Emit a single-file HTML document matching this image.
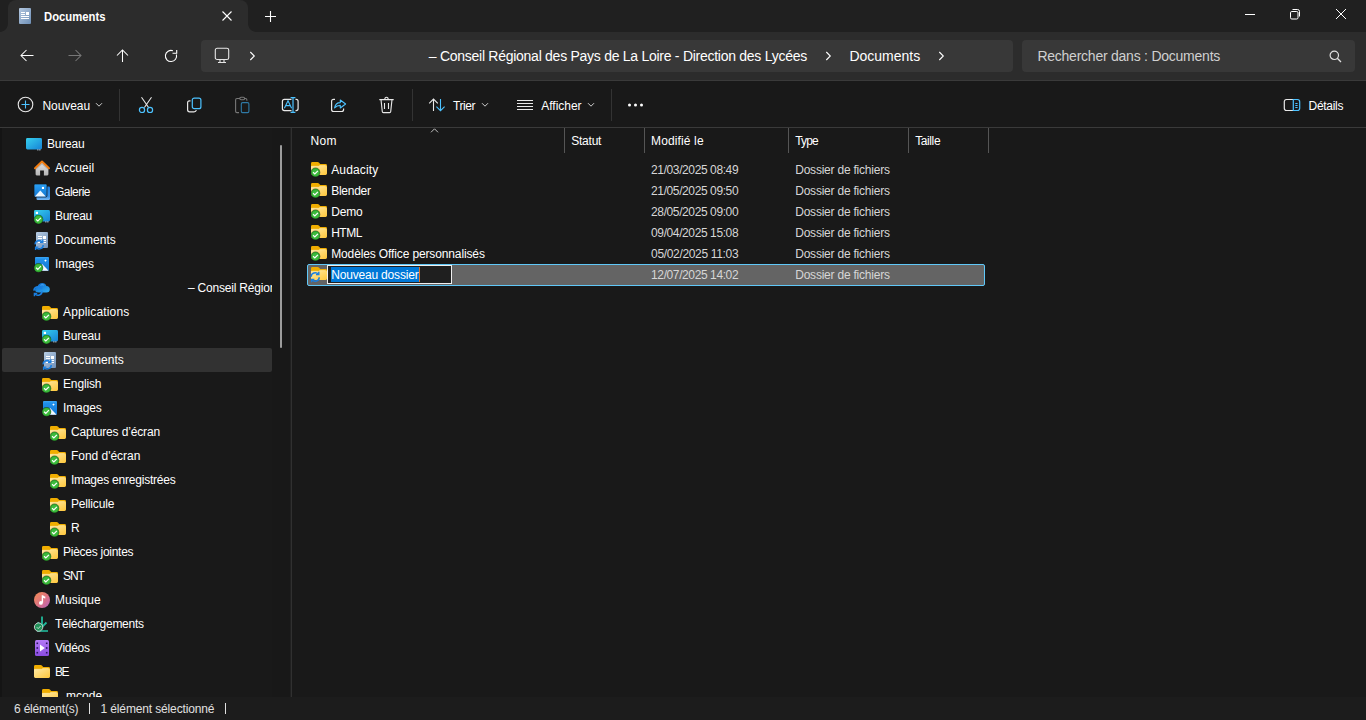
<!DOCTYPE html>
<html><head><meta charset="utf-8">
<style>
*{margin:0;padding:0;box-sizing:border-box}
html,body{width:1366px;height:720px;overflow:hidden;background:#191919;font-family:"Liberation Sans",sans-serif;color:#fff}
.a{position:absolute}
.t{position:absolute;white-space:nowrap}
svg{position:absolute;overflow:visible}
</style></head><body>

<div class="a" style="left:0;top:0;width:1366px;height:32px;background:#202020"></div>
<div class="a" style="left:8px;top:0;width:240px;height:32px;background:#2c2c2c;border-radius:8px 8px 0 0"></div>
<div class="a" style="left:0;top:24px;width:8px;height:8px;background:radial-gradient(circle at 0 0,#202020 7.5px,#2c2c2c 8.2px)"></div>
<div class="a" style="left:248px;top:24px;width:8px;height:8px;background:radial-gradient(circle at 8px 0,#202020 7.5px,#2c2c2c 8.2px)"></div>
<svg style="left:19px;top:8px;" width="13" height="17" viewBox="0 0 13 17"><defs><linearGradient id="dg" x1="0" y1="0" x2="1" y2="1"><stop offset="0" stop-color="#b4c8e0"/><stop offset="1" stop-color="#6e8fb6"/></linearGradient></defs>
<rect x="0" y="0" width="12" height="16" rx="1" fill="url(#dg)"/>
<rect x="2" y="4" width="4" height="1" fill="#fff"/><rect x="2" y="6" width="4" height="1" fill="#fff"/>
<rect x="7" y="4" width="3" height="3" fill="#fff"/><rect x="2" y="8" width="8" height="1" fill="#fff"/><rect x="2" y="10" width="8" height="1" fill="#fff"/></svg>
<div class="t" style="left:43.5px;top:8.84px;font-size:12px;line-height:16px;height:16px;color:#fff;font-weight:700;transform:scaleX(0.94);transform-origin:0 0">Documents</div>
<svg style="left:221px;top:10px;" width="12" height="12" viewBox="0 0 12 12"><path d="M1.5 1.5L10.5 10.5M10.5 1.5L1.5 10.5" stroke="#fff" stroke-width="1.1"/></svg>
<svg style="left:264px;top:10px;" width="13" height="13" viewBox="0 0 13 13"><path d="M6.5 1V12M1 6.5H12" stroke="#fff" stroke-width="1.1"/></svg>
<svg style="left:1244px;top:13px;" width="12" height="3" viewBox="0 0 12 3"><path d="M1 1.5H11" stroke="#fff" stroke-width="1"/></svg>
<svg style="left:1289px;top:8px;" width="12" height="12" viewBox="0 0 12 12"><rect x="1.5" y="3.5" width="7.5" height="7.5" rx="1.3" fill="none" stroke="#fff" stroke-width="1"/><path d="M3.5 1.5H8.5Q10.5 1.5 10.5 3.5V8.5" fill="none" stroke="#fff" stroke-width="1"/></svg>
<svg style="left:1335px;top:8px;" width="12" height="12" viewBox="0 0 12 12"><path d="M1 1L11 11M11 1L1 11" stroke="#fff" stroke-width="1"/></svg>
<div class="a" style="left:0;top:32px;width:1366px;height:48px;background:#2c2c2c"></div>
<div class="a" style="left:0;top:80px;width:1366px;height:1px;background:#3a3a3a"></div>
<div class="a" style="left:201px;top:40px;width:812px;height:32px;background:#383838;border-radius:4px"></div>
<div class="a" style="left:1022px;top:40px;width:333px;height:32px;background:#383838;border-radius:4px"></div>
<svg style="left:20px;top:49px;" width="15" height="14" viewBox="0 0 15 14"><path d="M1 6.5H13.5M6.5 1L1 6.5L6.5 12" fill="none" stroke="#fff" stroke-width="1.05"/></svg>
<svg style="left:67px;top:49px;" width="15" height="14" viewBox="0 0 15 14"><path d="M14 6.5H1.5M8.5 1L14 6.5L8.5 12" fill="none" stroke="#777" stroke-width="1.05"/></svg>
<svg style="left:116px;top:49px;" width="14" height="14" viewBox="0 0 14 14"><path d="M6.5 1V13M1 6.5L6.5 1L12 6.5" fill="none" stroke="#fff" stroke-width="1.05"/></svg>
<svg style="left:164px;top:49px;" width="15" height="15" viewBox="0 0 15 15"><path d="M8.9 1.7A5.6 5.6 0 1 0 12.4 5.5" fill="none" stroke="#fff" stroke-width="1.1"/><path d="M12.7 1V4.3H8.5" fill="none" stroke="#fff" stroke-width="1.1"/></svg>
<svg style="left:214px;top:47px;" width="16" height="17" viewBox="0 0 16 17"><rect x="1.3" y="1.3" width="13.4" height="11.2" rx="1.8" fill="none" stroke="#e6e6e6" stroke-width="1.1"/><path d="M6 13V15M10 13V15M4 15.5H12" stroke="#e6e6e6" stroke-width="1.1"/></svg>
<svg style="left:249px;top:51px;" width="7" height="10" viewBox="0 0 7 10"><path d="M1.3 1L5.3 5L1.3 9" fill="none" stroke="#fff" stroke-width="1.1"/></svg>
<div class="t" style="left:428.8px;top:46.65px;font-size:14px;line-height:19px;height:19px;color:#fff;letter-spacing:-0.269px;">– Conseil Régional des Pays de La Loire - Direction des Lycées</div>
<svg style="left:824.5px;top:51px;" width="7" height="10" viewBox="0 0 7 10"><path d="M1.3 1L5.3 5L1.3 9" fill="none" stroke="#fff" stroke-width="1.1"/></svg>
<div class="t" style="left:849.4px;top:46.65px;font-size:14px;line-height:19px;height:19px;color:#fff;letter-spacing:-0.001px;">Documents</div>
<svg style="left:938px;top:51px;" width="7" height="10" viewBox="0 0 7 10"><path d="M1.3 1L5.3 5L1.3 9" fill="none" stroke="#fff" stroke-width="1.1"/></svg>
<div class="t" style="left:1037.4px;top:46.95px;font-size:14px;line-height:19px;height:19px;color:#d0d0d0;letter-spacing:-0.238px;">Rechercher dans : Documents</div>
<svg style="left:1329px;top:50px;" width="14" height="14" viewBox="0 0 14 14"><circle cx="5.3" cy="5.3" r="4.2" fill="none" stroke="#e0e0e0" stroke-width="1.2"/><path d="M8.3 8.3L12 12" stroke="#e0e0e0" stroke-width="1.3"/></svg>
<div class="a" style="left:0;top:81px;width:1366px;height:46px;background:#191919"></div>
<div class="a" style="left:0;top:127px;width:1366px;height:1px;background:#3a3a3a"></div>
<svg style="left:17px;top:96px;" width="18" height="18" viewBox="0 0 18 18"><circle cx="8.5" cy="8.5" r="7.3" fill="none" stroke="#e8e8e8" stroke-width="1.1"/><path d="M8.5 4.5V12.5M4.5 8.5H12.5" stroke="#4cc2ff" stroke-width="1.1"/></svg>
<div class="t" style="left:42.4px;top:97.84px;font-size:12px;line-height:16px;height:16px;color:#fff;letter-spacing:-0.044px;">Nouveau</div>
<svg style="left:95px;top:102px;" width="8" height="6" viewBox="0 0 8 6"><path d="M1 1.2L4 4.2L7 1.2" fill="none" stroke="#cfcfcf" stroke-width="1"/></svg>
<div class="a" style="left:119px;top:89px;width:1px;height:32px;background:#333"></div>
<svg style="left:138px;top:96px;" width="17" height="18" viewBox="0 0 17 18"><path d="M3.5 1.2L10.6 11.5M13.5 1.2L6.4 11.5" stroke="#e8e8e8" stroke-width="1.1"/><circle cx="4" cy="13.9" r="2.6" fill="none" stroke="#4cc2ff" stroke-width="1.2"/><circle cx="12" cy="13.9" r="2.6" fill="none" stroke="#4cc2ff" stroke-width="1.2"/></svg>
<svg style="left:186px;top:96px;" width="17" height="18" viewBox="0 0 17 18"><path d="M4.5 4.8H3.6Q1.6 4.8 1.6 6.8V13.8Q1.6 15.8 3.6 15.8H8Q10 15.8 10.3 14" fill="none" stroke="#e8e8e8" stroke-width="1.2"/><rect x="6.3" y="2.1" width="8.6" height="10.6" rx="2" fill="none" stroke="#4cc2ff" stroke-width="1.2"/></svg>
<svg style="left:234px;top:96px;" width="17" height="18" viewBox="0 0 17 18"><path d="M6 2.5H3Q1.6 2.5 1.6 4V15.3Q1.6 16.6 3 16.6H5" fill="none" stroke="#777" stroke-width="1.1"/><path d="M10 2.5H11.5Q12.9 2.5 12.9 4V4.8" fill="none" stroke="#777" stroke-width="1.1"/><rect x="5.8" y="1.3" width="4.8" height="2.4" rx="1.2" fill="none" stroke="#777" stroke-width="1.1"/><rect x="7.3" y="6.6" width="7.6" height="10" rx="1.3" fill="none" stroke="#2f7aa6" stroke-width="1.1"/></svg>
<svg style="left:281px;top:96px;" width="19" height="18" viewBox="0 0 19 18"><path d="M10.5 3.4H3.4Q1.4 3.4 1.4 5.4V12.6Q1.4 14.6 3.4 14.6H10.5M14.5 3.4H15.1Q17.1 3.4 17.1 5.4V12.6Q17.1 14.6 15.1 14.6H14.5" fill="none" stroke="#e8e8e8" stroke-width="1.2"/><path d="M12 1.6V16.4M9.6 1.6H14.4M9.6 16.4H14.4" stroke="#4cc2ff" stroke-width="1.2"/><path d="M3.4 12.3L7 4.8L10.6 12.3M4.8 9.6H9.2" fill="none" stroke="#4cc2ff" stroke-width="1.1"/></svg>
<svg style="left:330px;top:96px;" width="18" height="18" viewBox="0 0 18 18"><path d="M5 3.3H3.6Q1.6 3.3 1.6 5.3V13.5Q1.6 15.5 3.6 15.5H11.6Q13.6 15.5 13.6 13.5V12.5" fill="none" stroke="#e8e8e8" stroke-width="1.2"/><path d="M4.6 11.8Q5.5 6.6 10.3 6.6V4L15.6 8L10.3 12V9.4Q7 9.4 4.6 11.8Z" fill="none" stroke="#4cc2ff" stroke-width="1.1" stroke-linejoin="round"/></svg>
<svg style="left:378px;top:96px;" width="17" height="18" viewBox="0 0 17 18"><path d="M1.3 3.6H15.7M3 3.6L4.3 15.6Q4.4 16.6 5.4 16.6H11.6Q12.6 16.6 12.7 15.6L14 3.6M6.8 3.4Q6.8 1.3 8.5 1.3Q10.2 1.3 10.2 3.4M6.5 7V13M10.5 7V13" fill="none" stroke="#e8e8e8" stroke-width="1.1"/></svg>
<div class="a" style="left:412px;top:89px;width:1px;height:32px;background:#333"></div>
<svg style="left:428px;top:98px;" width="18" height="14" viewBox="0 0 18 14"><path d="M5.5 1V13M1.2 5.3L5.5 1L9.8 5.3" fill="none" stroke="#e8e8e8" stroke-width="1.1"/><path d="M12.5 1V13M8.4 8.6L12.5 12.7L16.6 8.6" fill="none" stroke="#4cc2ff" stroke-width="1.1"/></svg>
<div class="t" style="left:453px;top:97.84px;font-size:12px;line-height:16px;height:16px;color:#fff;letter-spacing:-0.430px;">Trier</div>
<svg style="left:481px;top:102px;" width="8" height="6" viewBox="0 0 8 6"><path d="M1 1.2L4 4.2L7 1.2" fill="none" stroke="#cfcfcf" stroke-width="1"/></svg>
<svg style="left:516px;top:98px;" width="18" height="14" viewBox="0 0 18 14"><path d="M1 2.5H17M1 5.5H17M1 8.5H17M1 11.5H17" stroke="#e8e8e8" stroke-width="1"/></svg>
<div class="t" style="left:541.3px;top:97.84px;font-size:12px;line-height:16px;height:16px;color:#fff;letter-spacing:-0.024px;">Afficher</div>
<svg style="left:587px;top:102px;" width="8" height="6" viewBox="0 0 8 6"><path d="M1 1.2L4 4.2L7 1.2" fill="none" stroke="#cfcfcf" stroke-width="1"/></svg>
<div class="a" style="left:611px;top:89px;width:1px;height:32px;background:#333"></div>
<svg style="left:627px;top:102px;" width="18" height="6" viewBox="0 0 18 6"><circle cx="2.5" cy="3" r="1.5" fill="#fff"/><circle cx="8.5" cy="3" r="1.5" fill="#fff"/><circle cx="14.5" cy="3" r="1.5" fill="#fff"/></svg>
<svg style="left:1283px;top:98px;" width="18" height="14" viewBox="0 0 18 14"><path d="M10.5 1.5H3.5Q1.3 1.5 1.3 3.7V10.3Q1.3 12.5 3.5 12.5H10.5" fill="none" stroke="#e8e8e8" stroke-width="1.2"/><path d="M10.3 1.5H14.5Q16.7 1.5 16.7 3.7V10.3Q16.7 12.5 14.5 12.5H10.3V1.5Z" fill="none" stroke="#4cc2ff" stroke-width="1.2"/><path d="M12.3 5.5H14.6M12.3 7.5H14.6M12.3 9.5H14.6" stroke="#4cc2ff" stroke-width="1"/></svg>
<div class="t" style="left:1308.6px;top:97.84px;font-size:12px;line-height:16px;height:16px;color:#fff;letter-spacing:-0.313px;">Détails</div>
<div class="a" style="left:0;top:128px;width:2px;height:569px;background:#141414"></div>
<div class="a" style="left:272px;top:128px;width:18px;height:569px;background:#181818"></div>
<div class="a" style="left:290px;top:128px;width:1px;height:569px;background:#202020"></div>
<div class="a" style="left:291px;top:128px;width:1px;height:569px;background:#303030"></div>
<div class="a" style="left:2px;top:348px;width:270px;height:24px;background:#323232;border-radius:2px"></div>
<div class="a" style="left:280px;top:145px;width:2px;height:203px;background:#9c9c9c;border-radius:1px"></div>
<div class="a" style="left:0;top:128px;width:272px;height:569px;overflow:hidden">
<svg style="left:26px;top:10px;" width="16" height="13" viewBox="0 0 16 13"><defs><linearGradient id="g1" x1="0" y1="0" x2="1" y2="1"><stop offset="0" stop-color="#36d0ee"/><stop offset="1" stop-color="#1682d6"/></linearGradient></defs><rect x="0" y="0" width="16" height="11.5" rx="1.4" fill="url(#g1)"/><rect x="11.3" y="11.4" width="1.1" height="1" fill="#dfefff"/><rect x="13.3" y="11.4" width="1.1" height="1" fill="#dfefff"/></svg>
<div class="t" style="left:47px;top:7.84px;font-size:12px;line-height:16px;color:#fff;letter-spacing:-0.224px;">Bureau</div>
<svg style="left:34px;top:32px;" width="16" height="16" viewBox="0 0 16 16"><defs><linearGradient id="g2" x1="0" y1="0" x2="0" y2="1"><stop offset="0" stop-color="#e4e4e4"/><stop offset="1" stop-color="#b4b4b4"/></linearGradient></defs><path d="M1.6 7.6V14.3Q1.6 15.4 2.7 15.4H6.1V10.6H9.9V15.4H13.3Q14.4 15.4 14.4 14.3V7.6L8 2.2Z" fill="url(#g2)"/><path d="M1.6 8.2V10L8 4.6L14.4 10V8.2L8 2.8Z" fill="#8a8a8a" opacity="0.45"/><path d="M1 8.2L8 1.6L15 8.2" fill="none" stroke="#f07b0f" stroke-width="2" stroke-linecap="round" stroke-linejoin="round"/></svg>
<div class="t" style="left:55px;top:31.84px;font-size:12px;line-height:16px;color:#fff;letter-spacing:0.080px;">Accueil</div>
<svg style="left:34px;top:56px;" width="16" height="16" viewBox="0 0 16 16"><defs><linearGradient id="g3" x1="0" y1="0" x2="0" y2="1"><stop offset="0" stop-color="#2aa0f4"/><stop offset="1" stop-color="#1274d0"/></linearGradient><linearGradient id="g4" x1="0" y1="0" x2="0" y2="1"><stop offset="0" stop-color="#1a7ee0"/><stop offset="0.75" stop-color="#3a90e4"/><stop offset="1" stop-color="#7ab8f2"/></linearGradient></defs><rect x="2.5" y="2.5" width="13.5" height="13.5" rx="1.2" fill="url(#g4)"/><rect x="0" y="0" width="13" height="13" rx="1.2" fill="url(#g3)" stroke="#141414" stroke-width="0.7"/><path d="M0.8 12.6L6.3 6.6L11.8 12.6Z" fill="#eaf5ff"/><rect x="7.9" y="2.9" width="2.1" height="2.1" fill="#fff"/></svg>
<div class="t" style="left:55px;top:55.84px;font-size:12px;line-height:16px;color:#fff;letter-spacing:-0.535px;">Galerie</div>
<svg style="left:34px;top:82px;" width="16" height="13" viewBox="0 0 16 13"><defs><linearGradient id="g5" x1="0" y1="0" x2="1" y2="1"><stop offset="0" stop-color="#36d0ee"/><stop offset="1" stop-color="#1682d6"/></linearGradient></defs><rect x="0" y="0" width="16" height="11.5" rx="1.4" fill="url(#g5)"/><rect x="11.3" y="11.4" width="1.1" height="1" fill="#dfefff"/><rect x="13.3" y="11.4" width="1.1" height="1" fill="#dfefff"/><rect x="1.8" y="1.8" width="2.2" height="2.2" fill="#fff"/><circle cx="4.5" cy="9.5" r="4.800000000000001" fill="#141414" opacity="0.6"/><circle cx="4.5" cy="9.5" r="4.4" fill="#2a9d2a"/><circle cx="4.5" cy="9.5" r="3.5000000000000004" fill="#3dbb3d"/><path d="M2.1 9.4L3.8 11.0L6.9 7.9" fill="none" stroke="#fff" stroke-width="1.2"/></svg>
<div class="t" style="left:55px;top:79.84px;font-size:12px;line-height:16px;color:#fff;letter-spacing:-0.304px;">Bureau</div>
<svg style="left:34px;top:104px;" width="16" height="16" viewBox="0 0 16 16"><defs><linearGradient id="g6" x1="0" y1="0" x2="1" y2="1"><stop offset="0" stop-color="#b9cde3"/><stop offset="1" stop-color="#6f90b8"/></linearGradient></defs><rect x="2" y="0" width="12" height="16" rx="1" fill="url(#g6)"/><rect x="4" y="4" width="4" height="1" fill="#fff"/><rect x="4" y="6" width="4" height="1" fill="#fff"/><rect x="9" y="4" width="3" height="3" fill="#fff"/><rect x="4" y="8" width="8" height="1" fill="#fff"/><rect x="4" y="10" width="8" height="1" fill="#fff"/><path d="M1.2000000000000002 12.399999999999999A4 3.6 0 0 1 8.4 10.0" fill="none" stroke="#1a7fe0" stroke-width="1.5"/><path d="M6.0 10.299999999999999H8.8V7.3999999999999995" fill="none" stroke="#1a7fe0" stroke-width="1.4"/><path d="M9.2 13.0A4 3.6 0 0 1 2.0 15.399999999999999" fill="none" stroke="#1a7fe0" stroke-width="1.5"/><path d="M4.4 15.1H1.6V18.0" fill="none" stroke="#1a7fe0" stroke-width="1.4"/></svg>
<div class="t" style="left:55px;top:103.84px;font-size:12px;line-height:16px;color:#fff;letter-spacing:0.014px;">Documents</div>
<svg style="left:34px;top:129px;" width="16" height="14" viewBox="0 0 16 14"><defs><linearGradient id="g7" x1="0" y1="0" x2="0" y2="1"><stop offset="0" stop-color="#3da6f4"/><stop offset="0.15" stop-color="#2090ea"/><stop offset="1" stop-color="#1476d4"/></linearGradient></defs><rect x="1" y="0" width="14" height="13.8" rx="1" fill="url(#g7)"/><path d="M2 13.8L8.2 7L14.6 13.8Z" fill="#f4faff"/><path d="M11.5 2.4L12.7 3.6L11.5 4.8L10.3 3.6Z" fill="#fff"/><circle cx="4.5" cy="10.8" r="4.800000000000001" fill="#141414" opacity="0.6"/><circle cx="4.5" cy="10.8" r="4.4" fill="#2a9d2a"/><circle cx="4.5" cy="10.8" r="3.5000000000000004" fill="#3dbb3d"/><path d="M2.1 10.700000000000001L3.8 12.3L6.9 9.200000000000001" fill="none" stroke="#fff" stroke-width="1.2"/></svg>
<div class="t" style="left:55px;top:127.84px;font-size:12px;line-height:16px;color:#fff;letter-spacing:-0.090px;">Images</div>
<svg style="left:34px;top:152px;" width="16" height="16" viewBox="0 0 16 16"><defs><linearGradient id="g8" x1="0" y1="0" x2="1" y2="1"><stop offset="0" stop-color="#0a64c8"/><stop offset="1" stop-color="#32b0f4"/></linearGradient></defs><path d="M4.5 12.5Q1 12.5 1 9.5Q1 7 3.6 6.6Q4.5 3 8.3 3Q11.4 3 12.4 6Q15.8 6.3 15.8 9.3Q15.8 12.5 12.5 12.5Z" fill="url(#g8)"/><path d="M6.5 5.3Q8 4.4 9.8 5" fill="none" stroke="#5fb0ff" stroke-width="0.8"/><path d="M0.0 10.7A4 3.6 0 0 1 7.2 8.3" fill="none" stroke="#1a7fe0" stroke-width="1.5"/><path d="M4.8 8.6H7.6V5.7" fill="none" stroke="#1a7fe0" stroke-width="1.4"/><path d="M8.0 11.3A4 3.6 0 0 1 0.7999999999999998 13.7" fill="none" stroke="#1a7fe0" stroke-width="1.5"/><path d="M3.2 13.4H0.3999999999999999V16.3" fill="none" stroke="#1a7fe0" stroke-width="1.4"/></svg>
<svg style="left:42px;top:178px;" width="16" height="13" viewBox="0 0 16 13"><defs><linearGradient id="g9" x1="0" y1="0" x2="1" y2="1"><stop offset="0" stop-color="#ffeaa6"/><stop offset="1" stop-color="#ffc73a"/></linearGradient></defs><path d="M0 1.4Q0 0 1.4 0H6.6Q7.4 0 7.9 0.6L9.2 2H14.6Q16 2 16 3.4V6H0Z" fill="#f0ad00"/><path d="M0 4.3H7.6L8.8 3.6H14.6Q16 3.6 16 5V11.6Q16 13 14.6 13H1.4Q0 13 0 11.6Z" fill="url(#g9)"/><path d="M0.3 4.3H7.6L8.8 3.6H14.6" fill="none" stroke="#fff2c4" stroke-width="0.6" opacity="0.8"/><circle cx="4.5" cy="10.4" r="4.800000000000001" fill="#141414" opacity="0.6"/><circle cx="4.5" cy="10.4" r="4.4" fill="#2a9d2a"/><circle cx="4.5" cy="10.4" r="3.5000000000000004" fill="#3dbb3d"/><path d="M2.1 10.3L3.8 11.9L6.9 8.8" fill="none" stroke="#fff" stroke-width="1.2"/></svg>
<div class="t" style="left:63px;top:175.84px;font-size:12px;line-height:16px;color:#fff;letter-spacing:0.136px;">Applications</div>
<svg style="left:42px;top:202px;" width="16" height="13" viewBox="0 0 16 13"><defs><linearGradient id="g10" x1="0" y1="0" x2="1" y2="1"><stop offset="0" stop-color="#36d0ee"/><stop offset="1" stop-color="#1682d6"/></linearGradient></defs><rect x="0" y="0" width="16" height="11.5" rx="1.4" fill="url(#g10)"/><rect x="11.3" y="11.4" width="1.1" height="1" fill="#dfefff"/><rect x="13.3" y="11.4" width="1.1" height="1" fill="#dfefff"/><rect x="1.8" y="1.8" width="2.2" height="2.2" fill="#fff"/><circle cx="4.5" cy="9.5" r="4.800000000000001" fill="#141414" opacity="0.6"/><circle cx="4.5" cy="9.5" r="4.4" fill="#2a9d2a"/><circle cx="4.5" cy="9.5" r="3.5000000000000004" fill="#3dbb3d"/><path d="M2.1 9.4L3.8 11.0L6.9 7.9" fill="none" stroke="#fff" stroke-width="1.2"/></svg>
<div class="t" style="left:63px;top:199.84px;font-size:12px;line-height:16px;color:#fff;letter-spacing:-0.204px;">Bureau</div>
<svg style="left:42px;top:224px;" width="16" height="16" viewBox="0 0 16 16"><defs><linearGradient id="g11" x1="0" y1="0" x2="1" y2="1"><stop offset="0" stop-color="#b9cde3"/><stop offset="1" stop-color="#6f90b8"/></linearGradient></defs><rect x="2" y="0" width="12" height="16" rx="1" fill="url(#g11)"/><rect x="4" y="4" width="4" height="1" fill="#fff"/><rect x="4" y="6" width="4" height="1" fill="#fff"/><rect x="9" y="4" width="3" height="3" fill="#fff"/><rect x="4" y="8" width="8" height="1" fill="#fff"/><rect x="4" y="10" width="8" height="1" fill="#fff"/><path d="M1.2000000000000002 12.399999999999999A4 3.6 0 0 1 8.4 10.0" fill="none" stroke="#1a7fe0" stroke-width="1.5"/><path d="M6.0 10.299999999999999H8.8V7.3999999999999995" fill="none" stroke="#1a7fe0" stroke-width="1.4"/><path d="M9.2 13.0A4 3.6 0 0 1 2.0 15.399999999999999" fill="none" stroke="#1a7fe0" stroke-width="1.5"/><path d="M4.4 15.1H1.6V18.0" fill="none" stroke="#1a7fe0" stroke-width="1.4"/></svg>
<div class="t" style="left:63px;top:223.84px;font-size:12px;line-height:16px;color:#fff;letter-spacing:0.014px;">Documents</div>
<svg style="left:42px;top:250px;" width="16" height="13" viewBox="0 0 16 13"><defs><linearGradient id="g12" x1="0" y1="0" x2="1" y2="1"><stop offset="0" stop-color="#ffeaa6"/><stop offset="1" stop-color="#ffc73a"/></linearGradient></defs><path d="M0 1.4Q0 0 1.4 0H6.6Q7.4 0 7.9 0.6L9.2 2H14.6Q16 2 16 3.4V6H0Z" fill="#f0ad00"/><path d="M0 4.3H7.6L8.8 3.6H14.6Q16 3.6 16 5V11.6Q16 13 14.6 13H1.4Q0 13 0 11.6Z" fill="url(#g12)"/><path d="M0.3 4.3H7.6L8.8 3.6H14.6" fill="none" stroke="#fff2c4" stroke-width="0.6" opacity="0.8"/><circle cx="4.5" cy="10.4" r="4.800000000000001" fill="#141414" opacity="0.6"/><circle cx="4.5" cy="10.4" r="4.4" fill="#2a9d2a"/><circle cx="4.5" cy="10.4" r="3.5000000000000004" fill="#3dbb3d"/><path d="M2.1 10.3L3.8 11.9L6.9 8.8" fill="none" stroke="#fff" stroke-width="1.2"/></svg>
<div class="t" style="left:63px;top:247.84px;font-size:12px;line-height:16px;color:#fff;letter-spacing:-0.147px;">English</div>
<svg style="left:42px;top:273px;" width="16" height="14" viewBox="0 0 16 14"><defs><linearGradient id="g13" x1="0" y1="0" x2="0" y2="1"><stop offset="0" stop-color="#3da6f4"/><stop offset="0.15" stop-color="#2090ea"/><stop offset="1" stop-color="#1476d4"/></linearGradient></defs><rect x="1" y="0" width="14" height="13.8" rx="1" fill="url(#g13)"/><path d="M2 13.8L8.2 7L14.6 13.8Z" fill="#f4faff"/><path d="M11.5 2.4L12.7 3.6L11.5 4.8L10.3 3.6Z" fill="#fff"/><circle cx="4.5" cy="10.8" r="4.800000000000001" fill="#141414" opacity="0.6"/><circle cx="4.5" cy="10.8" r="4.4" fill="#2a9d2a"/><circle cx="4.5" cy="10.8" r="3.5000000000000004" fill="#3dbb3d"/><path d="M2.1 10.700000000000001L3.8 12.3L6.9 9.200000000000001" fill="none" stroke="#fff" stroke-width="1.2"/></svg>
<div class="t" style="left:63px;top:271.84px;font-size:12px;line-height:16px;color:#fff;letter-spacing:-0.110px;">Images</div>
<svg style="left:50px;top:298px;" width="16" height="13" viewBox="0 0 16 13"><defs><linearGradient id="g14" x1="0" y1="0" x2="1" y2="1"><stop offset="0" stop-color="#ffeaa6"/><stop offset="1" stop-color="#ffc73a"/></linearGradient></defs><path d="M0 1.4Q0 0 1.4 0H6.6Q7.4 0 7.9 0.6L9.2 2H14.6Q16 2 16 3.4V6H0Z" fill="#f0ad00"/><path d="M0 4.3H7.6L8.8 3.6H14.6Q16 3.6 16 5V11.6Q16 13 14.6 13H1.4Q0 13 0 11.6Z" fill="url(#g14)"/><path d="M0.3 4.3H7.6L8.8 3.6H14.6" fill="none" stroke="#fff2c4" stroke-width="0.6" opacity="0.8"/><circle cx="4.5" cy="10.4" r="4.800000000000001" fill="#141414" opacity="0.6"/><circle cx="4.5" cy="10.4" r="4.4" fill="#2a9d2a"/><circle cx="4.5" cy="10.4" r="3.5000000000000004" fill="#3dbb3d"/><path d="M2.1 10.3L3.8 11.9L6.9 8.8" fill="none" stroke="#fff" stroke-width="1.2"/></svg>
<div class="t" style="left:71px;top:295.84px;font-size:12px;line-height:16px;color:#fff;letter-spacing:-0.154px;">Captures d’écran</div>
<svg style="left:50px;top:322px;" width="16" height="13" viewBox="0 0 16 13"><defs><linearGradient id="g15" x1="0" y1="0" x2="1" y2="1"><stop offset="0" stop-color="#ffeaa6"/><stop offset="1" stop-color="#ffc73a"/></linearGradient></defs><path d="M0 1.4Q0 0 1.4 0H6.6Q7.4 0 7.9 0.6L9.2 2H14.6Q16 2 16 3.4V6H0Z" fill="#f0ad00"/><path d="M0 4.3H7.6L8.8 3.6H14.6Q16 3.6 16 5V11.6Q16 13 14.6 13H1.4Q0 13 0 11.6Z" fill="url(#g15)"/><path d="M0.3 4.3H7.6L8.8 3.6H14.6" fill="none" stroke="#fff2c4" stroke-width="0.6" opacity="0.8"/><circle cx="4.5" cy="10.4" r="4.800000000000001" fill="#141414" opacity="0.6"/><circle cx="4.5" cy="10.4" r="4.4" fill="#2a9d2a"/><circle cx="4.5" cy="10.4" r="3.5000000000000004" fill="#3dbb3d"/><path d="M2.1 10.3L3.8 11.9L6.9 8.8" fill="none" stroke="#fff" stroke-width="1.2"/></svg>
<div class="t" style="left:71px;top:319.84px;font-size:12px;line-height:16px;color:#fff;letter-spacing:-0.027px;">Fond d'écran</div>
<svg style="left:50px;top:346px;" width="16" height="13" viewBox="0 0 16 13"><defs><linearGradient id="g16" x1="0" y1="0" x2="1" y2="1"><stop offset="0" stop-color="#ffeaa6"/><stop offset="1" stop-color="#ffc73a"/></linearGradient></defs><path d="M0 1.4Q0 0 1.4 0H6.6Q7.4 0 7.9 0.6L9.2 2H14.6Q16 2 16 3.4V6H0Z" fill="#f0ad00"/><path d="M0 4.3H7.6L8.8 3.6H14.6Q16 3.6 16 5V11.6Q16 13 14.6 13H1.4Q0 13 0 11.6Z" fill="url(#g16)"/><path d="M0.3 4.3H7.6L8.8 3.6H14.6" fill="none" stroke="#fff2c4" stroke-width="0.6" opacity="0.8"/><circle cx="4.5" cy="10.4" r="4.800000000000001" fill="#141414" opacity="0.6"/><circle cx="4.5" cy="10.4" r="4.4" fill="#2a9d2a"/><circle cx="4.5" cy="10.4" r="3.5000000000000004" fill="#3dbb3d"/><path d="M2.1 10.3L3.8 11.9L6.9 8.8" fill="none" stroke="#fff" stroke-width="1.2"/></svg>
<div class="t" style="left:71px;top:343.84px;font-size:12px;line-height:16px;color:#fff;letter-spacing:-0.223px;">Images enregistrées</div>
<svg style="left:50px;top:370px;" width="16" height="13" viewBox="0 0 16 13"><defs><linearGradient id="g17" x1="0" y1="0" x2="1" y2="1"><stop offset="0" stop-color="#ffeaa6"/><stop offset="1" stop-color="#ffc73a"/></linearGradient></defs><path d="M0 1.4Q0 0 1.4 0H6.6Q7.4 0 7.9 0.6L9.2 2H14.6Q16 2 16 3.4V6H0Z" fill="#f0ad00"/><path d="M0 4.3H7.6L8.8 3.6H14.6Q16 3.6 16 5V11.6Q16 13 14.6 13H1.4Q0 13 0 11.6Z" fill="url(#g17)"/><path d="M0.3 4.3H7.6L8.8 3.6H14.6" fill="none" stroke="#fff2c4" stroke-width="0.6" opacity="0.8"/><circle cx="4.5" cy="10.4" r="4.800000000000001" fill="#141414" opacity="0.6"/><circle cx="4.5" cy="10.4" r="4.4" fill="#2a9d2a"/><circle cx="4.5" cy="10.4" r="3.5000000000000004" fill="#3dbb3d"/><path d="M2.1 10.3L3.8 11.9L6.9 8.8" fill="none" stroke="#fff" stroke-width="1.2"/></svg>
<div class="t" style="left:71px;top:367.84px;font-size:12px;line-height:16px;color:#fff;letter-spacing:-0.164px;">Pellicule</div>
<svg style="left:50px;top:394px;" width="16" height="13" viewBox="0 0 16 13"><defs><linearGradient id="g18" x1="0" y1="0" x2="1" y2="1"><stop offset="0" stop-color="#ffeaa6"/><stop offset="1" stop-color="#ffc73a"/></linearGradient></defs><path d="M0 1.4Q0 0 1.4 0H6.6Q7.4 0 7.9 0.6L9.2 2H14.6Q16 2 16 3.4V6H0Z" fill="#f0ad00"/><path d="M0 4.3H7.6L8.8 3.6H14.6Q16 3.6 16 5V11.6Q16 13 14.6 13H1.4Q0 13 0 11.6Z" fill="url(#g18)"/><path d="M0.3 4.3H7.6L8.8 3.6H14.6" fill="none" stroke="#fff2c4" stroke-width="0.6" opacity="0.8"/><circle cx="4.5" cy="10.4" r="4.800000000000001" fill="#141414" opacity="0.6"/><circle cx="4.5" cy="10.4" r="4.4" fill="#2a9d2a"/><circle cx="4.5" cy="10.4" r="3.5000000000000004" fill="#3dbb3d"/><path d="M2.1 10.3L3.8 11.9L6.9 8.8" fill="none" stroke="#fff" stroke-width="1.2"/></svg>
<div class="t" style="left:71px;top:391.84px;font-size:12px;line-height:16px;color:#fff;letter-spacing:-0.2px;">R</div>
<svg style="left:42px;top:418px;" width="16" height="13" viewBox="0 0 16 13"><defs><linearGradient id="g19" x1="0" y1="0" x2="1" y2="1"><stop offset="0" stop-color="#ffeaa6"/><stop offset="1" stop-color="#ffc73a"/></linearGradient></defs><path d="M0 1.4Q0 0 1.4 0H6.6Q7.4 0 7.9 0.6L9.2 2H14.6Q16 2 16 3.4V6H0Z" fill="#f0ad00"/><path d="M0 4.3H7.6L8.8 3.6H14.6Q16 3.6 16 5V11.6Q16 13 14.6 13H1.4Q0 13 0 11.6Z" fill="url(#g19)"/><path d="M0.3 4.3H7.6L8.8 3.6H14.6" fill="none" stroke="#fff2c4" stroke-width="0.6" opacity="0.8"/><circle cx="4.5" cy="10.4" r="4.800000000000001" fill="#141414" opacity="0.6"/><circle cx="4.5" cy="10.4" r="4.4" fill="#2a9d2a"/><circle cx="4.5" cy="10.4" r="3.5000000000000004" fill="#3dbb3d"/><path d="M2.1 10.3L3.8 11.9L6.9 8.8" fill="none" stroke="#fff" stroke-width="1.2"/></svg>
<div class="t" style="left:63px;top:415.84px;font-size:12px;line-height:16px;color:#fff;letter-spacing:-0.265px;">Pièces jointes</div>
<svg style="left:42px;top:442px;" width="16" height="13" viewBox="0 0 16 13"><defs><linearGradient id="g20" x1="0" y1="0" x2="1" y2="1"><stop offset="0" stop-color="#ffeaa6"/><stop offset="1" stop-color="#ffc73a"/></linearGradient></defs><path d="M0 1.4Q0 0 1.4 0H6.6Q7.4 0 7.9 0.6L9.2 2H14.6Q16 2 16 3.4V6H0Z" fill="#f0ad00"/><path d="M0 4.3H7.6L8.8 3.6H14.6Q16 3.6 16 5V11.6Q16 13 14.6 13H1.4Q0 13 0 11.6Z" fill="url(#g20)"/><path d="M0.3 4.3H7.6L8.8 3.6H14.6" fill="none" stroke="#fff2c4" stroke-width="0.6" opacity="0.8"/><circle cx="4.5" cy="10.4" r="4.800000000000001" fill="#141414" opacity="0.6"/><circle cx="4.5" cy="10.4" r="4.4" fill="#2a9d2a"/><circle cx="4.5" cy="10.4" r="3.5000000000000004" fill="#3dbb3d"/><path d="M2.1 10.3L3.8 11.9L6.9 8.8" fill="none" stroke="#fff" stroke-width="1.2"/></svg>
<div class="t" style="left:63px;top:439.84px;font-size:12px;line-height:16px;color:#fff;letter-spacing:-1.085px;">SNT</div>
<svg style="left:34px;top:464px;" width="16" height="16" viewBox="0 0 16 16"><defs><linearGradient id="g21" x1="0" y1="0" x2="1" y2="1"><stop offset="0" stop-color="#f48c50"/><stop offset="0.6" stop-color="#d8708a"/><stop offset="1" stop-color="#b060c0"/></linearGradient></defs><circle cx="8" cy="8" r="8" fill="url(#g21)"/><path d="M7.7 3.2H9.1Q9.8 4.4 11.3 4.6V6.6Q9.9 6.5 9.1 5.8V10.8H7.7Z" fill="#fff"/><circle cx="6.9" cy="10.9" r="1.9" fill="#fff"/></svg>
<div class="t" style="left:55px;top:463.84px;font-size:12px;line-height:16px;color:#fff;letter-spacing:0.053px;">Musique</div>
<svg style="left:34px;top:488px;" width="16" height="16" viewBox="0 0 16 16"><path d="M8 0.5V10.5M3.5 6.5L8 11L12.5 6.5" fill="none" stroke="#20b89a" stroke-width="1.8"/><path d="M3 15H14" stroke="#20b89a" stroke-width="1.6"/><circle cx="4.6" cy="11.1" r="4.2" fill="#22925a" stroke="#d8d8d8" stroke-width="0.9"/><path d="M2.8 11.2L4.2 12.6L6.6 10" fill="none" stroke="#cfe8d8" stroke-width="0.9"/></svg>
<div class="t" style="left:55px;top:487.84px;font-size:12px;line-height:16px;color:#fff;letter-spacing:-0.265px;">Téléchargements</div>
<svg style="left:35px;top:512px;" width="14" height="16" viewBox="0 0 14 16"><defs><linearGradient id="g22" x1="0" y1="0" x2="0" y2="1"><stop offset="0" stop-color="#b47af6"/><stop offset="1" stop-color="#8a4ce0"/></linearGradient></defs><rect x="0" y="0" width="14" height="16" rx="1.5" fill="url(#g22)"/><rect x="1.5" y="2.5" width="1.6" height="1.6" fill="#2a1460"/><rect x="1.5" y="7.2" width="1.6" height="1.6" fill="#2a1460"/><rect x="1.5" y="11.9" width="1.6" height="1.6" fill="#2a1460"/><rect x="10.9" y="2.5" width="1.6" height="1.6" fill="#2a1460"/><rect x="10.9" y="7.2" width="1.6" height="1.6" fill="#2a1460"/><rect x="10.9" y="11.9" width="1.6" height="1.6" fill="#2a1460"/><path d="M5 4.5L9.8 8L5 11.5Z" fill="#fff"/></svg>
<div class="t" style="left:55px;top:511.84px;font-size:12px;line-height:16px;color:#fff;letter-spacing:-0.295px;">Vidéos</div>
<svg style="left:34px;top:537px;" width="16" height="13" viewBox="0 0 16 13"><defs><linearGradient id="g23" x1="0" y1="0" x2="1" y2="1"><stop offset="0" stop-color="#ffeaa6"/><stop offset="1" stop-color="#ffc73a"/></linearGradient></defs><path d="M0 1.4Q0 0 1.4 0H6.6Q7.4 0 7.9 0.6L9.2 2H14.6Q16 2 16 3.4V6H0Z" fill="#f0ad00"/><path d="M0 4.3H7.6L8.8 3.6H14.6Q16 3.6 16 5V11.6Q16 13 14.6 13H1.4Q0 13 0 11.6Z" fill="url(#g23)"/><path d="M0.3 4.3H7.6L8.8 3.6H14.6" fill="none" stroke="#fff2c4" stroke-width="0.6" opacity="0.8"/></svg>
<div class="t" style="left:55px;top:535.84px;font-size:12px;line-height:16px;color:#fff;letter-spacing:-1.504px;">BE</div>
<svg style="left:42px;top:561px;" width="16" height="13" viewBox="0 0 16 13"><defs><linearGradient id="g24" x1="0" y1="0" x2="1" y2="1"><stop offset="0" stop-color="#ffeaa6"/><stop offset="1" stop-color="#ffc73a"/></linearGradient></defs><path d="M0 1.4Q0 0 1.4 0H6.6Q7.4 0 7.9 0.6L9.2 2H14.6Q16 2 16 3.4V6H0Z" fill="#f0ad00"/><path d="M0 4.3H7.6L8.8 3.6H14.6Q16 3.6 16 5V11.6Q16 13 14.6 13H1.4Q0 13 0 11.6Z" fill="url(#g24)"/><path d="M0.3 4.3H7.6L8.8 3.6H14.6" fill="none" stroke="#fff2c4" stroke-width="0.6" opacity="0.8"/></svg>
<div class="t" style="left:66px;top:559.84px;font-size:12px;line-height:16px;color:#fff;letter-spacing:0.064px;">mcode</div>
<div class="t" style="left:188px;top:151.84px;font-size:12px;line-height:16px;color:#fff;letter-spacing:-0.2px">– Conseil Régional des Pays de La Loire</div>
</div>
<div class="t" style="left:310.4px;top:132.84px;font-size:12px;line-height:16px;height:16px;color:#fff;letter-spacing:0.380px;">Nom</div>
<div class="t" style="left:571.2px;top:132.84px;font-size:12px;line-height:16px;height:16px;color:#fff;letter-spacing:-0.224px;">Statut</div>
<div class="t" style="left:651.1px;top:132.84px;font-size:12px;line-height:16px;height:16px;color:#fff;letter-spacing:0.124px;">Modifié le</div>
<div class="t" style="left:795.2px;top:132.84px;font-size:12px;line-height:16px;height:16px;color:#fff;letter-spacing:-0.847px;">Type</div>
<div class="t" style="left:915.2px;top:132.84px;font-size:12px;line-height:16px;height:16px;color:#fff;letter-spacing:-0.394px;">Taille</div>
<div class="a" style="left:564px;top:128px;width:1px;height:25px;background:#555"></div>
<div class="a" style="left:644px;top:128px;width:1px;height:25px;background:#555"></div>
<div class="a" style="left:788px;top:128px;width:1px;height:25px;background:#555"></div>
<div class="a" style="left:908px;top:128px;width:1px;height:25px;background:#555"></div>
<div class="a" style="left:988px;top:128px;width:1px;height:25px;background:#555"></div>
<svg style="left:429px;top:127.5px;" width="11" height="6" viewBox="0 0 11 6"><path d="M2 4.3L5.5 0.8L9 4.3" fill="none" stroke="#c0c0c0" stroke-width="1"/></svg>
<div class="a" style="left:307px;top:264px;width:678px;height:22px;background:#646464;border:1px solid #60c8f8;border-radius:2px"></div>
<svg style="left:311px;top:162px;" width="16" height="13" viewBox="0 0 16 13"><defs><linearGradient id="g25" x1="0" y1="0" x2="1" y2="1"><stop offset="0" stop-color="#ffeaa6"/><stop offset="1" stop-color="#ffc73a"/></linearGradient></defs><path d="M0 1.4Q0 0 1.4 0H6.6Q7.4 0 7.9 0.6L9.2 2H14.6Q16 2 16 3.4V6H0Z" fill="#f0ad00"/><path d="M0 4.3H7.6L8.8 3.6H14.6Q16 3.6 16 5V11.6Q16 13 14.6 13H1.4Q0 13 0 11.6Z" fill="url(#g25)"/><path d="M0.3 4.3H7.6L8.8 3.6H14.6" fill="none" stroke="#fff2c4" stroke-width="0.6" opacity="0.8"/><circle cx="4.5" cy="10.4" r="4.800000000000001" fill="#141414" opacity="0.6"/><circle cx="4.5" cy="10.4" r="4.4" fill="#2a9d2a"/><circle cx="4.5" cy="10.4" r="3.5000000000000004" fill="#3dbb3d"/><path d="M2.1 10.3L3.8 11.9L6.9 8.8" fill="none" stroke="#fff" stroke-width="1.2"/></svg>
<div class="t" style="left:331.2px;top:161.64px;font-size:12px;line-height:16px;height:16px;color:#fff;letter-spacing:0.139px;">Audacity</div>
<div class="t" style="left:651.1px;top:161.64px;font-size:12px;line-height:16px;height:16px;color:#d6d6d6;letter-spacing:-0.397px;">21/03/2025 08:49</div>
<div class="t" style="left:795.2px;top:161.64px;font-size:12px;line-height:16px;height:16px;color:#d6d6d6;letter-spacing:-0.217px;">Dossier de fichiers</div>
<svg style="left:311px;top:183px;" width="16" height="13" viewBox="0 0 16 13"><defs><linearGradient id="g26" x1="0" y1="0" x2="1" y2="1"><stop offset="0" stop-color="#ffeaa6"/><stop offset="1" stop-color="#ffc73a"/></linearGradient></defs><path d="M0 1.4Q0 0 1.4 0H6.6Q7.4 0 7.9 0.6L9.2 2H14.6Q16 2 16 3.4V6H0Z" fill="#f0ad00"/><path d="M0 4.3H7.6L8.8 3.6H14.6Q16 3.6 16 5V11.6Q16 13 14.6 13H1.4Q0 13 0 11.6Z" fill="url(#g26)"/><path d="M0.3 4.3H7.6L8.8 3.6H14.6" fill="none" stroke="#fff2c4" stroke-width="0.6" opacity="0.8"/><circle cx="4.5" cy="10.4" r="4.800000000000001" fill="#141414" opacity="0.6"/><circle cx="4.5" cy="10.4" r="4.4" fill="#2a9d2a"/><circle cx="4.5" cy="10.4" r="3.5000000000000004" fill="#3dbb3d"/><path d="M2.1 10.3L3.8 11.9L6.9 8.8" fill="none" stroke="#fff" stroke-width="1.2"/></svg>
<div class="t" style="left:331.2px;top:182.64px;font-size:12px;line-height:16px;height:16px;color:#fff;letter-spacing:-0.261px;">Blender</div>
<div class="t" style="left:651.1px;top:182.64px;font-size:12px;line-height:16px;height:16px;color:#d6d6d6;letter-spacing:-0.397px;">21/05/2025 09:50</div>
<div class="t" style="left:795.2px;top:182.64px;font-size:12px;line-height:16px;height:16px;color:#d6d6d6;letter-spacing:-0.217px;">Dossier de fichiers</div>
<svg style="left:311px;top:204px;" width="16" height="13" viewBox="0 0 16 13"><defs><linearGradient id="g27" x1="0" y1="0" x2="1" y2="1"><stop offset="0" stop-color="#ffeaa6"/><stop offset="1" stop-color="#ffc73a"/></linearGradient></defs><path d="M0 1.4Q0 0 1.4 0H6.6Q7.4 0 7.9 0.6L9.2 2H14.6Q16 2 16 3.4V6H0Z" fill="#f0ad00"/><path d="M0 4.3H7.6L8.8 3.6H14.6Q16 3.6 16 5V11.6Q16 13 14.6 13H1.4Q0 13 0 11.6Z" fill="url(#g27)"/><path d="M0.3 4.3H7.6L8.8 3.6H14.6" fill="none" stroke="#fff2c4" stroke-width="0.6" opacity="0.8"/><circle cx="4.5" cy="10.4" r="4.800000000000001" fill="#141414" opacity="0.6"/><circle cx="4.5" cy="10.4" r="4.4" fill="#2a9d2a"/><circle cx="4.5" cy="10.4" r="3.5000000000000004" fill="#3dbb3d"/><path d="M2.1 10.3L3.8 11.9L6.9 8.8" fill="none" stroke="#fff" stroke-width="1.2"/></svg>
<div class="t" style="left:331.2px;top:203.64px;font-size:12px;line-height:16px;height:16px;color:#fff;letter-spacing:-0.179px;">Demo</div>
<div class="t" style="left:651.1px;top:203.64px;font-size:12px;line-height:16px;height:16px;color:#d6d6d6;letter-spacing:-0.397px;">28/05/2025 09:00</div>
<div class="t" style="left:795.2px;top:203.64px;font-size:12px;line-height:16px;height:16px;color:#d6d6d6;letter-spacing:-0.217px;">Dossier de fichiers</div>
<svg style="left:311px;top:225px;" width="16" height="13" viewBox="0 0 16 13"><defs><linearGradient id="g28" x1="0" y1="0" x2="1" y2="1"><stop offset="0" stop-color="#ffeaa6"/><stop offset="1" stop-color="#ffc73a"/></linearGradient></defs><path d="M0 1.4Q0 0 1.4 0H6.6Q7.4 0 7.9 0.6L9.2 2H14.6Q16 2 16 3.4V6H0Z" fill="#f0ad00"/><path d="M0 4.3H7.6L8.8 3.6H14.6Q16 3.6 16 5V11.6Q16 13 14.6 13H1.4Q0 13 0 11.6Z" fill="url(#g28)"/><path d="M0.3 4.3H7.6L8.8 3.6H14.6" fill="none" stroke="#fff2c4" stroke-width="0.6" opacity="0.8"/><circle cx="4.5" cy="10.4" r="4.800000000000001" fill="#141414" opacity="0.6"/><circle cx="4.5" cy="10.4" r="4.4" fill="#2a9d2a"/><circle cx="4.5" cy="10.4" r="3.5000000000000004" fill="#3dbb3d"/><path d="M2.1 10.3L3.8 11.9L6.9 8.8" fill="none" stroke="#fff" stroke-width="1.2"/></svg>
<div class="t" style="left:331.2px;top:224.64px;font-size:12px;line-height:16px;height:16px;color:#fff;letter-spacing:-0.497px;">HTML</div>
<div class="t" style="left:651.1px;top:224.64px;font-size:12px;line-height:16px;height:16px;color:#d6d6d6;letter-spacing:-0.397px;">09/04/2025 15:08</div>
<div class="t" style="left:795.2px;top:224.64px;font-size:12px;line-height:16px;height:16px;color:#d6d6d6;letter-spacing:-0.217px;">Dossier de fichiers</div>
<svg style="left:311px;top:246px;" width="16" height="13" viewBox="0 0 16 13"><defs><linearGradient id="g29" x1="0" y1="0" x2="1" y2="1"><stop offset="0" stop-color="#ffeaa6"/><stop offset="1" stop-color="#ffc73a"/></linearGradient></defs><path d="M0 1.4Q0 0 1.4 0H6.6Q7.4 0 7.9 0.6L9.2 2H14.6Q16 2 16 3.4V6H0Z" fill="#f0ad00"/><path d="M0 4.3H7.6L8.8 3.6H14.6Q16 3.6 16 5V11.6Q16 13 14.6 13H1.4Q0 13 0 11.6Z" fill="url(#g29)"/><path d="M0.3 4.3H7.6L8.8 3.6H14.6" fill="none" stroke="#fff2c4" stroke-width="0.6" opacity="0.8"/><circle cx="4.5" cy="10.4" r="4.800000000000001" fill="#141414" opacity="0.6"/><circle cx="4.5" cy="10.4" r="4.4" fill="#2a9d2a"/><circle cx="4.5" cy="10.4" r="3.5000000000000004" fill="#3dbb3d"/><path d="M2.1 10.3L3.8 11.9L6.9 8.8" fill="none" stroke="#fff" stroke-width="1.2"/></svg>
<div class="t" style="left:331.2px;top:245.64px;font-size:12px;line-height:16px;height:16px;color:#fff;letter-spacing:-0.129px;">Modèles Office personnalisés</div>
<div class="t" style="left:651.1px;top:245.64px;font-size:12px;line-height:16px;height:16px;color:#d6d6d6;letter-spacing:-0.337px;">05/02/2025 11:03</div>
<div class="t" style="left:795.2px;top:245.64px;font-size:12px;line-height:16px;height:16px;color:#d6d6d6;letter-spacing:-0.217px;">Dossier de fichiers</div>
<svg style="left:311px;top:267px;" width="16" height="13" viewBox="0 0 16 13"><defs><linearGradient id="g30" x1="0" y1="0" x2="1" y2="1"><stop offset="0" stop-color="#ffeaa6"/><stop offset="1" stop-color="#ffc73a"/></linearGradient></defs><path d="M0 1.4Q0 0 1.4 0H6.6Q7.4 0 7.9 0.6L9.2 2H14.6Q16 2 16 3.4V6H0Z" fill="#f0ad00"/><path d="M0 4.3H7.6L8.8 3.6H14.6Q16 3.6 16 5V11.6Q16 13 14.6 13H1.4Q0 13 0 11.6Z" fill="url(#g30)"/><path d="M0.3 4.3H7.6L8.8 3.6H14.6" fill="none" stroke="#fff2c4" stroke-width="0.6" opacity="0.8"/><path d="M0.20000000000000018 9.7A4 3.6 0 0 1 7.4 7.3" fill="none" stroke="#1a7fe0" stroke-width="1.5"/><path d="M5.0 7.6H7.800000000000001V4.7" fill="none" stroke="#1a7fe0" stroke-width="1.4"/><path d="M8.2 10.3A4 3.6 0 0 1 1.0 12.7" fill="none" stroke="#1a7fe0" stroke-width="1.5"/><path d="M3.4000000000000004 12.4H0.6000000000000001V15.3" fill="none" stroke="#1a7fe0" stroke-width="1.4"/></svg>
<div class="t" style="left:651.1px;top:266.64px;font-size:12px;line-height:16px;height:16px;color:#d6d6d6;letter-spacing:-0.397px;">12/07/2025 14:02</div>
<div class="t" style="left:795.2px;top:266.64px;font-size:12px;line-height:16px;height:16px;color:#d6d6d6;letter-spacing:-0.217px;">Dossier de fichiers</div>
<div class="a" style="left:327px;top:265px;width:125px;height:19px;background:#1f1f1f;border:1px solid #f0f0f0"></div>
<div class="a" style="left:331px;top:267px;width:88px;height:15px;background:#0078d7"></div>
<div class="a" style="left:419px;top:267px;width:1px;height:15px;background:#e07020"></div>
<div class="t" style="left:331.2px;top:266.64px;font-size:12px;line-height:16px;height:16px;color:#fff;letter-spacing:-0.183px;">Nouveau dossier</div>
<div class="a" style="left:0;top:697px;width:1366px;height:23px;background:#1c1c1c"></div>
<div class="t" style="left:14px;top:700.84px;font-size:12px;line-height:16px;height:16px;color:#e0e0e0;letter-spacing:-0.190px;">6 élément(s)</div>
<div class="a" style="left:89px;top:703px;width:1px;height:11px;background:#e0e0e0"></div>
<div class="t" style="left:100.6px;top:700.84px;font-size:12px;line-height:16px;height:16px;color:#e0e0e0;letter-spacing:-0.143px;">1 élément sélectionné</div>
<div class="a" style="left:225px;top:703px;width:1px;height:11px;background:#e0e0e0"></div>
</body></html>
